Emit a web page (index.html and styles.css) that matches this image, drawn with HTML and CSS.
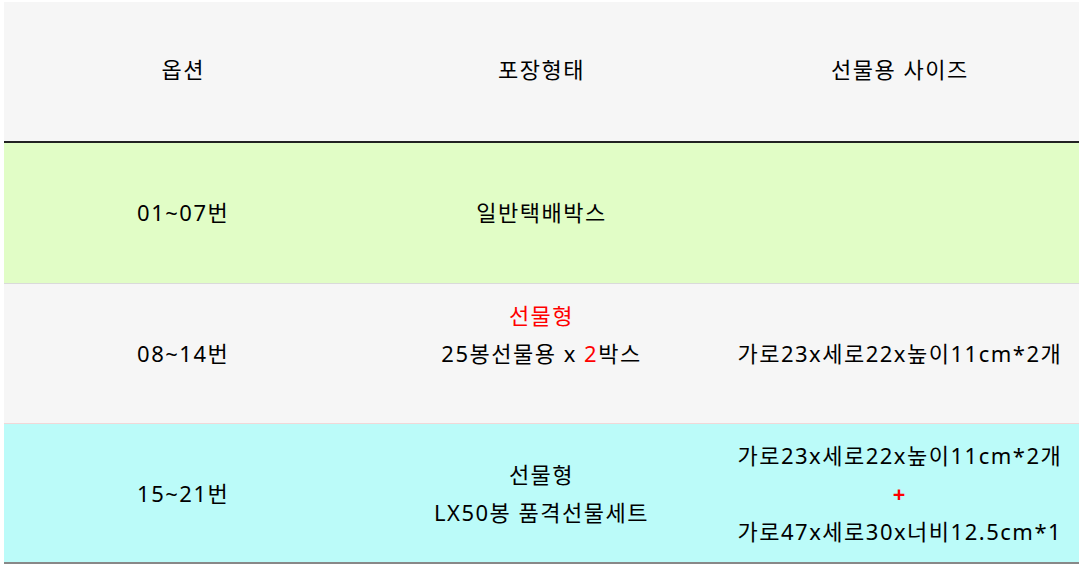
FILE: index.html
```html
<!DOCTYPE html>
<html lang="ko">
<head>
<meta charset="utf-8">
<link rel="stylesheet" href="styles.css">
</head>
<body>
<table class="opt">
  <colgroup><col class="c"><col class="c"><col class="c"></colgroup>
  <thead>
    <tr class="head"><th>옵션</th><th>포장형태</th><th>선물용 사이즈</th></tr>
  </thead>
  <tbody>
    <tr class="r1"><td>01~07번</td><td>일반택배박스</td><td></td></tr>
    <tr class="r2"><td>08~14번</td><td><span class="red">선물형</span><br>25봉선물용 x <span class="red">2</span>박스<br>&nbsp;</td><td>가로23x세로22x높이11cm*2개</td></tr>
    <tr class="r3"><td>15~21번</td><td>선물형<br>LX50봉 품격선물세트</td><td>가로23x세로22x높이11cm*2개<br><span class="red plus">+</span><br>가로47x세로30x너비12.5cm*1</td></tr>
  </tbody>
</table>
</body>
</html>
```
FILE: styles.css
```css
html, body { margin: 0; padding: 0; background: #fff; }
body { padding: 2px 1px 0 4px; }
.opt {
  width: 1075px;
  border-collapse: collapse;
  table-layout: fixed;
  font-family: "Noto Sans", "Noto Sans CJK KR", sans-serif;
  font-size: 22px;
  letter-spacing: 1.5px;
  color: #000;
}
.opt th, .opt td {
  text-align: center;
  vertical-align: middle;
  padding: 0;
  line-height: 38px;
  font-weight: 400;
}
.head { background: #f6f6f6; height: 140px; border-bottom: 2px solid #222; }
.head th { padding-bottom: 5px; }
.r1 { background: #e1fdc6; height: 141px; border-bottom: 1px solid #dadada; }
.r1 td { padding-bottom: 2px; }
.r2 { background: #f6f6f6; height: 140px; border-bottom: 1px solid #f0d8d8; }
.r3 { background: #bbfbf9; height: 140px; border-bottom: 2px solid #888; }
.red { color: #ff0000; }
.plus { font-weight: 700; }
```
